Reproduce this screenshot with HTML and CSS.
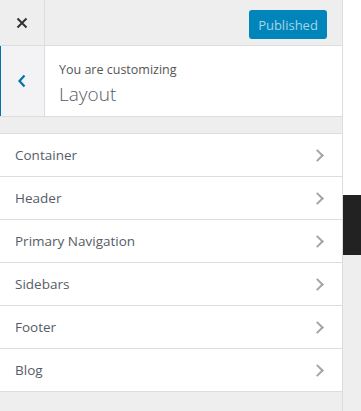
FILE: index.html
```html
<!DOCTYPE html>
<html lang="en">
<head>
    <meta charset="UTF-8">
    <meta name="viewport" content="width=device-width, initial-scale=1.0">
    <title>Customize: Layout</title>
    <link rel="stylesheet" href="styles.css">
</head>
<body>
  <div class="wrap">
    <div class="sidebar">

      <div class="topbar">
        <button class="close" aria-label="Close">
          <svg width="12" height="12" viewBox="0 0 12 12"><path d="M1.5 1.5 L10.5 10.5 M10.5 1.5 L1.5 10.5" stroke="#333" stroke-width="2"/></svg>
        </button>
        <div class="actions">
          <button class="publish" disabled>Published</button>
        </div>
      </div>

      <div class="info">
        <button class="back" aria-label="Back">
          <svg width="10" height="14" viewBox="0 0 10 14"><path d="M7.5 1.5 L2.5 7 L7.5 12.5" fill="none" stroke="#0073aa" stroke-width="2.2"/></svg>
        </button>
        <div class="title">
          <span class="small">You are customizing</span>
          <span class="big">Layout</span>
        </div>
      </div>

      <ul class="sections">
        <li class="row">Container<span class="arrow"></span></li>
        <li class="row">Header<span class="arrow"></span></li>
        <li class="row">Primary Navigation<span class="arrow"></span></li>
        <li class="row">Sidebars<span class="arrow"></span></li>
        <li class="row">Footer<span class="arrow"></span></li>
        <li class="row">Blog<span class="arrow"></span></li>
      </ul>
    </div>

    <div class="preview">
      <div class="preview-top"></div>
      <div class="preview-dark"></div>
      <div class="preview-rest"></div>
    </div>
  </div>
</body>
</html>
```

FILE: styles.css
```css
body {
  margin: 0;
  font-family: "Open Sans", "Noto Sans", sans-serif;
  color: #555d66;
}

.wrap {
  display: flex;
  height: 411px;
}

.sidebar {
  width: 342px;
  border-right: 1px solid #ddd;
  background-color: #eee;
}

.topbar {
  display: flex;
  height: 45px;
  border-bottom: 1px solid #ddd;
}

.close {
  width: 45px;
  border: 0;
  border-right: 1px solid #ddd;
  background: #eee;
  padding: 0 0 0 0;
  display: flex;
  align-items: center;
  justify-content: center;
}

.actions {
  flex: 1;
  display: flex;
  justify-content: flex-end;
  padding: 10px 15px 0 0;
}

.publish {
  width: 78px;
  height: 29px;
  border: 0;
  border-radius: 3px;
  background-color: #0085ba;
  color: #a7d3e8;
  font-family: "Open Sans", "Noto Sans", sans-serif;
  font-size: 13px;
  padding: 0;
}

.info {
  display: flex;
  height: 70px;
  background: #fff;
  border-bottom: 1px solid #ddd;
}

.back {
  width: 45px;
  border: 0;
  border-left: 1px solid #0073aa;
  border-right: 1px solid #ddd;
  background: #f3f3f5;
  display: flex;
  align-items: center;
  justify-content: center;
  padding: 0 1px 0 0;
}

.title {
  display: flex;
  flex-direction: column;
  padding: 15px 0 0 14px;
  color: #555;
}

.small {
  font-size: 12.5px;
  line-height: 18px;
}

.big {
  font-size: 19px;
  font-weight: 300;
  line-height: 30px;
  color: #555d66;
}

.sections {
  list-style: none;
  margin: 16px 0 0 0;
  padding: 0;
  border-top: 1px solid #ddd;
}

.row {
  display: flex;
  align-items: center;
  justify-content: space-between;
  height: 42px;
  padding: 0 20px 0 15px;
  background: #fff;
  border-bottom: 1px solid #ddd;
  font-size: 13.5px;
}

.arrow {
  width: 7px;
  height: 7px;
  border-top: 2px solid #a0a5aa;
  border-right: 2px solid #a0a5aa;
  transform: rotate(45deg);
}

.preview {
  flex: 1;
  display: flex;
  flex-direction: column;
}

.preview-top {
  height: 195px;
  background: #fff;
}

.preview-dark {
  height: 60px;
  background: #222;
}

.preview-rest {
  flex: 1;
  background: #eee;
}
```
